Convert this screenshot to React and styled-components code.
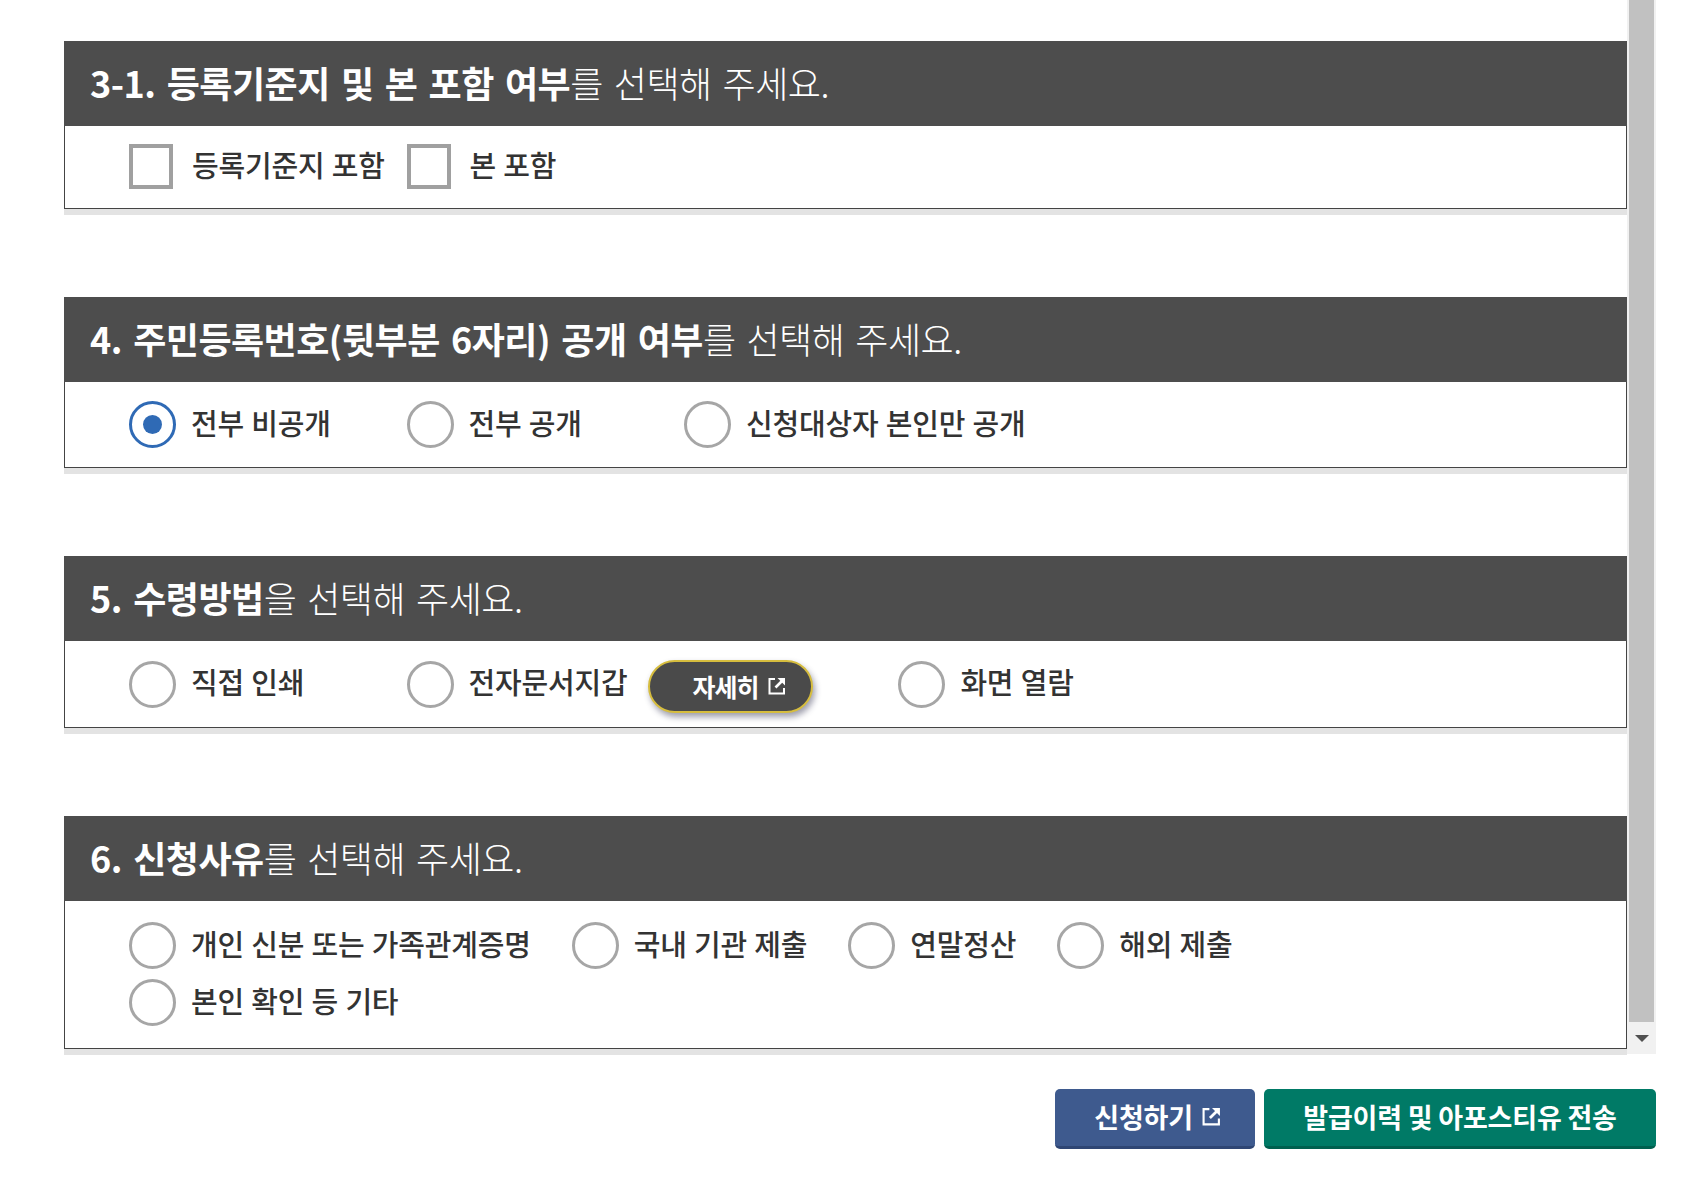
import styled, { createGlobalStyle } from "styled-components";

const GlobalStyle = createGlobalStyle`
    html, body {
        margin: 0;
        padding: 0;
        background: #fff;
    }
    body {
        font-family: "Noto Sans CJK KR", "Noto Sans", sans-serif;
        color: #333;
    }
`;

const sections = [
    {
        id: "s31",
        num: "3-1.",
        strong: "등록기준지 및 본 포함 여부",
        rest: "를 선택해 주세요.",
        type: "check",
        options: ["등록기준지 포함", "본 포함"],
    },
    {
        id: "s4",
        num: "4.",
        strong: "주민등록번호(뒷부분 6자리) 공개 여부",
        rest: "를 선택해 주세요.",
        type: "radio",
        options: ["전부 비공개", "전부 공개", "신청대상자 본인만 공개"],
        checked: 0,
    },
    {
        id: "s5",
        num: "5.",
        strong: "수령방법",
        rest: "을 선택해 주세요.",
        type: "radio",
        options: ["직접 인쇄", "전자문서지갑", "화면 열람"],
        detailAt: 1,
    },
    {
        id: "s6",
        num: "6.",
        strong: "신청사유",
        rest: "를 선택해 주세요.",
        type: "radio",
        compact: true,
        options: ["개인 신분 또는 가족관계증명", "국내 기관 제출", "연말정산", "해외 제출", "본인 확인 등 기타"],
    },
];

const LinkIcon = ({ size = 18 }) => (
    <svg width={size} height={size} viewBox="0 0 18 18" fill="none" stroke="currentColor">
        <path d="M7 2H1.500v14.500H16V11" strokeWidth="2" />
        <path d="M7.500 10.500 14.500 3.500" strokeWidth="2.600" />
        <path d="M9.500 1H17v7.500z" fill="currentColor" stroke="none" />
    </svg>
);

const App = () => (
    <>
        <GlobalStyle />
        <Page>
            <Viewport>
                <Content>
                    {sections.map(section => (
                        <Section key={section.id}>
                            <Heading>
                                <HeadingText>
                                    <strong>{section.num} {section.strong}</strong>
                                    <span>{section.rest}</span>
                                </HeadingText>
                            </Heading>
                            <Body $type={section.type} $compact={section.compact}>
                                {section.options.map((label, index) => (
                                    <Option key={label} $fluid={section.compact || section.detailAt === index}>
                                        {section.type === "check" ? <CheckBox /> : <Radio $checked={section.checked === index} />}
                                        <Label $check={section.type === "check"}>{label}</Label>
                                        {section.detailAt === index && (
                                            <DetailButton type="button">
                                                자세히 <LinkIcon size={18} />
                                            </DetailButton>
                                        )}
                                    </Option>
                                ))}
                            </Body>
                        </Section>
                    ))}
                </Content>
                <Scrollbar>
                    <Thumb />
                    <ArrowDown />
                </Scrollbar>
            </Viewport>
            <Actions>
                <ActionButton type="button" $bg="#3e5a8e" $edge="#2f4674" $w="200px" $pad="5px">
                    신청하기 <LinkIcon size={19} />
                </ActionButton>
                <ActionButton type="button" $bg="#007a66" $edge="#00604f" $w="392px">
                    발급이력 및 아포스티유 전송
                </ActionButton>
            </Actions>
        </Page>
    </>
);

const Page = styled.div`
    width: 1692px;
    height: 1188px;
    padding-right: 36px;
    box-sizing: border-box;
    overflow: hidden;
`;

const Viewport = styled.div`
    display: flex;
    height: 1054px;
`;

const Content = styled.div`
    flex: 1;
    padding: 41px 0 0 64px;
`;

const Section = styled.section`
    margin-bottom: 88px;
    box-shadow: 0 6px 0 #e3e3e3;

    &:last-child {
        margin-bottom: 0;
    }
`;

const Heading = styled.h2`
    margin: 0;
    height: 85px;
    display: flex;
    align-items: center;
    padding-left: 26px;
    background: #4d4d4d;
    color: #fff;
    font-size: 36px;
    font-weight: 400;
`;

const HeadingText = styled.div`
    position: relative;
    top: -2px;
    letter-spacing: -0.5px;
    word-spacing: 3.5px;
    white-space: pre;

    strong {
        font-weight: 700;
    }

    span {
        font-weight: 300;
    }
`;

const Body = styled.div`
    display: flex;
    flex-wrap: wrap;
    align-items: center;
    row-gap: 10px;
    padding: ${p => (p.$compact ? "21px 100px 22px 64px" : p.$type === "check" ? "18px 0 19px 64px" : "19px 0 19px 64px")};
    background: #fff;
    border: 1px solid #444;
    border-top: 0;
`;

const Option = styled.div`
    display: flex;
    align-items: center;
    box-sizing: border-box;
    flex: none;
    width: ${p => (p.$fluid ? "auto" : "277.5px")};
    padding-right: ${p => (p.$fluid ? "41px" : "0")};
`;

const Radio = styled.span`
    position: relative;
    flex: none;
    width: 47px;
    height: 47px;
    box-sizing: border-box;
    border-radius: 50%;
    border: 3px solid ${p => (p.$checked ? "#2f6ab5" : "#a6a6a6")};
    background: #fff;

    &::after {
        content: "";
        display: ${p => (p.$checked ? "block" : "none")};
        position: absolute;
        top: 11px;
        left: 11px;
        width: 19px;
        height: 19px;
        border-radius: 50%;
        background: #2f6ab5;
    }
`;

const CheckBox = styled.span`
    flex: none;
    width: 44px;
    height: 45px;
    box-sizing: border-box;
    border: 4px solid #a0a0a0;
    background: #fff;
`;

const Label = styled.span`
    position: relative;
    top: -3px;
    margin-left: ${p => (p.$check ? "19px" : "15px")};
    font-size: 29px;
    font-weight: 500;
    line-height: 44px;
    letter-spacing: -0.2px;
    word-spacing: 1px;
    color: #333;
    white-space: nowrap;
`;

const DetailButton = styled.button`
    flex: none;
    display: flex;
    align-items: center;
    gap: 5px;
    box-sizing: border-box;
    width: 165px;
    height: 53px;
    margin: 0 44px -5px 21px;
    padding: 0 0 2px 42px;
    border: 2px solid #d6bd3e;
    border-radius: 27px;
    background: #4a4a4a;
    box-shadow: 2px 4px 6px rgba(40, 40, 70, 0.45);
    color: #fff;
    font-family: inherit;
    font-size: 25px;
    font-weight: 700;
    letter-spacing: -1px;
    white-space: pre;
`;

const Scrollbar = styled.div`
    flex: none;
    display: flex;
    flex-direction: column;
    width: 29px;
    background: #f1f1f1;
`;

const Thumb = styled.div`
    height: 1022px;
    margin: 0 2px;
    background: #c1c1c1;
`;

const ArrowDown = styled.div`
    width: 0;
    height: 0;
    margin: 13px auto 0;
    border-left: 7px solid transparent;
    border-right: 7px solid transparent;
    border-top: 7px solid #505050;
`;

const Actions = styled.div`
    display: flex;
    justify-content: flex-end;
    gap: 9px;
    margin-top: 35px;
`;

const ActionButton = styled.button`
    display: flex;
    align-items: center;
    justify-content: center;
    gap: 3px;
    box-sizing: border-box;
    width: ${p => p.$w};
    height: 60px;
    padding: 0 0 2px ${p => p.$pad || "0"};
    border: 0;
    border-bottom: 3px solid ${p => p.$edge};
    border-radius: 5px;
    background: ${p => p.$bg};
    color: #fff;
    font-family: inherit;
    font-size: 27px;
    font-weight: 700;
    letter-spacing: -0.2px;
    white-space: pre;
`;

export default App;
